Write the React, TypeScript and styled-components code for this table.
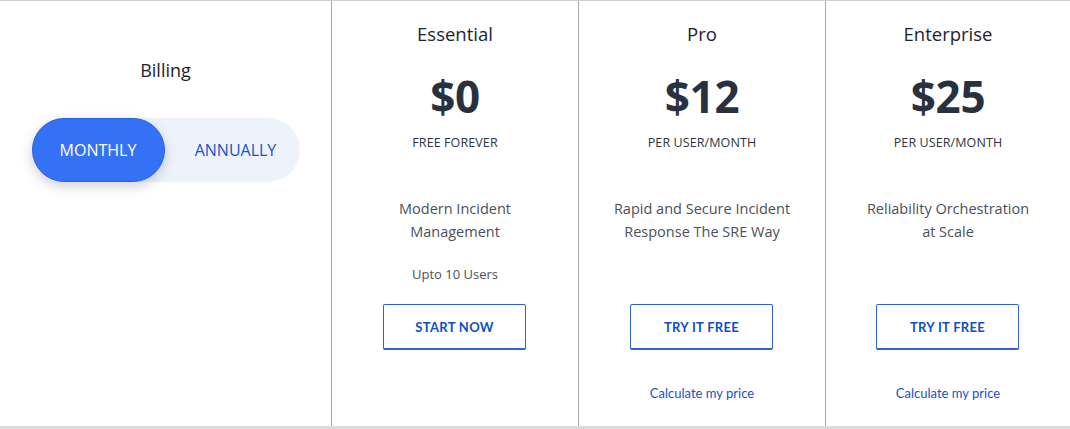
import React from "react";
import styled, { createGlobalStyle } from "styled-components";

const GlobalStyle = createGlobalStyle`
  html, body { margin: 0; padding: 0; background: #ffffff; }
  body { font-family: "Open Sans", "Noto Sans", sans-serif; }
  * { box-sizing: border-box; }
`;

const Table = styled.section`
  display: grid;
  grid-template-columns: 331px 247px 247px 1fr;
  width: 1070px;
  height: 429px;
  border-top: 1px solid #cfcfcf;
  border-bottom: 3px solid #dcdcdc;
  background: #fff;
`;

const BillingCol = styled.div`
  display: flex;
  flex-direction: column;
  align-items: center;
  padding-top: 57px;
`;

const BillingTitle = styled.h3`
  margin: 0;
  font-size: 18px;
  line-height: 24px;
  font-weight: 500;
  color: #1c2331;
`;

const Toggle = styled.div`
  margin-top: 36px;
  width: 268px;
  height: 64px;
  border-radius: 32px;
  background: #eef3fb;
  display: grid;
  grid-template-columns: 133px 1fr;
`;

const ToggleOption = styled.button<{ $active?: boolean }>`
  border: ${(p) => (p.$active ? "1px solid #2a62e6" : "none")};
  border-radius: 32px;
  background: ${(p) => (p.$active ? "#3571f5" : "transparent")};
  color: ${(p) => (p.$active ? "#ffffff" : "#1553c7")};
  box-shadow: ${(p) => (p.$active ? "0 4px 12px rgba(30, 40, 70, 0.22)" : "none")};
  font-family: "Open Sans", sans-serif;
  font-size: 16px;
  font-weight: 400;
  padding: ${(p) => (p.$active ? "0" : "0 0 0 7px")};
  cursor: pointer;
`;

const PlanCol = styled.div`
  border-left: 1px solid #a8a8a8;
  display: flex;
  flex-direction: column;
  align-items: center;
  padding-top: 21px;
  text-align: center;
`;

const PlanName = styled.h3`
  margin: 0;
  font-size: 18.5px;
  line-height: 24px;
  font-weight: 500;
  color: #1c2331;
`;

const Price = styled.div`
  margin-top: 24px;
  font-size: 44px;
  line-height: 52px;
  font-weight: 700;
  color: #29313e;
  letter-spacing: -0.3px;
`;

const Period = styled.div`
  margin-top: 13px;
  font-size: 12.5px;
  line-height: 16px;
  font-weight: 500;
  color: #2f3540;
  letter-spacing: 0.1px;
`;

const Details = styled.div`
  margin-top: 46px;
  height: 107px;
  display: flex;
  flex-direction: column;
  align-items: center;
`;

const Description = styled.p`
  margin: 0;
  font-size: 14.5px;
  line-height: 23px;
  color: #4b505a;
  max-width: 190px;
`;

const Users = styled.p`
  margin: 22px 0 0;
  font-size: 13px;
  line-height: 18px;
  color: #4b505a;
`;

const CtaButton = styled.button`
  width: 143px;
  height: 46px;
  margin-right: 1px;
  border: 1px solid #2c63d6;
  border-bottom-width: 2px;
  border-radius: 2px;
  background: #fff;
  color: #0d4fcb;
  font-family: "Lato", sans-serif;
  font-weight: 700;
  font-size: 13px;
  letter-spacing: 0.3px;
  padding: 0;
  cursor: pointer;
`;

const PriceLink = styled.a`
  margin-top: 34px;
  font-family: "Lato", sans-serif;
  font-size: 13px;
  line-height: 18px;
  color: #1553c7;
  text-decoration: none;
`;

type Plan = {
  name: string;
  price: string;
  period: string;
  description: string[];
  users?: string;
  cta: string;
  calc?: boolean;
};

const plans: Plan[] = [
  {
    name: "Essential",
    price: "$0",
    period: "FREE FOREVER",
    description: ["Modern Incident", "Management"],
    users: "Upto 10 Users",
    cta: "START NOW",
  },
  {
    name: "Pro",
    price: "$12",
    period: "PER USER/MONTH",
    description: ["Rapid and Secure Incident", "Response The SRE Way"],
    cta: "TRY IT FREE",
    calc: true,
  },
  {
    name: "Enterprise",
    price: "$25",
    period: "PER USER/MONTH",
    description: ["Reliability Orchestration", "at Scale"],
    cta: "TRY IT FREE",
    calc: true,
  },
];

export default function App() {
  return (
    <>
      <GlobalStyle />
      <Table>
        <BillingCol>
          <BillingTitle>Billing</BillingTitle>
          <Toggle>
            <ToggleOption $active>MONTHLY</ToggleOption>
            <ToggleOption>ANNUALLY</ToggleOption>
          </Toggle>
        </BillingCol>
        {plans.map((p) => (
          <PlanCol key={p.name}>
            <PlanName>{p.name}</PlanName>
            <Price>{p.price}</Price>
            <Period>{p.period}</Period>
            <Details>
              <Description>
                {p.description[0]}
                <br />
                {p.description[1]}
              </Description>
              {p.users && <Users>{p.users}</Users>}
            </Details>
            <CtaButton>{p.cta}</CtaButton>
            {p.calc && <PriceLink href="#">Calculate my price</PriceLink>}
          </PlanCol>
        ))}
      </Table>
    </>
  );
}
